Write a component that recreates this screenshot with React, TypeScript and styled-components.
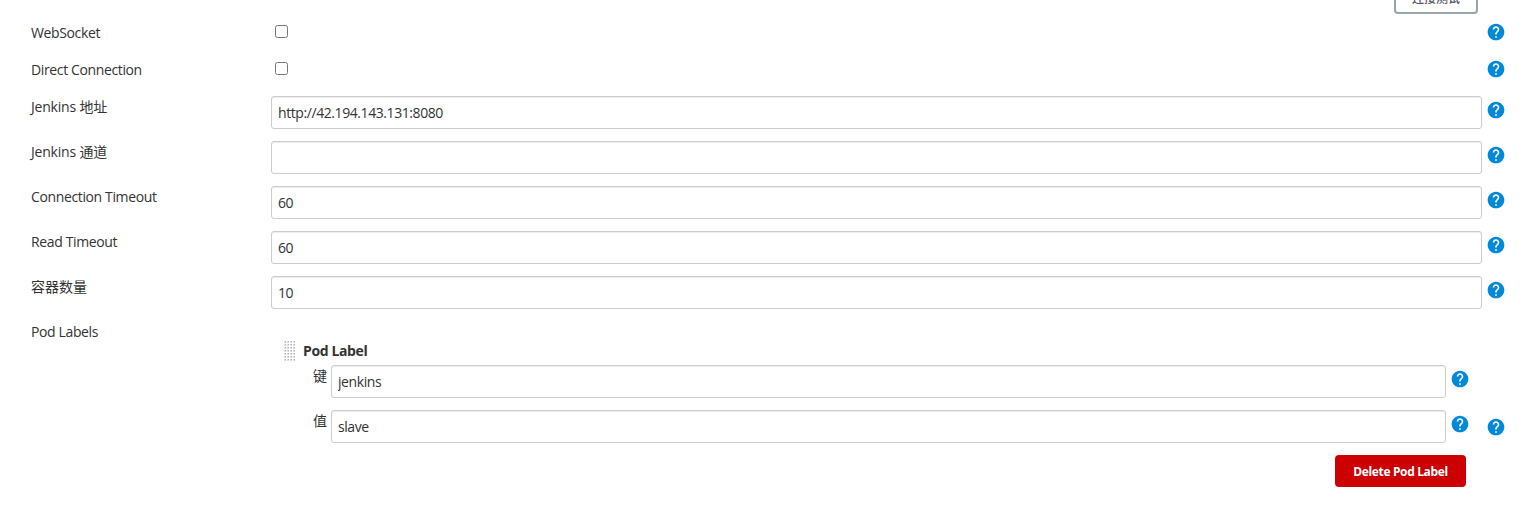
import React from "react";
import styled, { createGlobalStyle } from "styled-components";

const Global = createGlobalStyle`
  * { box-sizing: border-box; }
  body {
    margin: 0;
    background: #fff;
    color: #333;
    font: 14px/22px "Open Sans", "Noto Sans CJK SC", sans-serif;
    overflow: hidden;
  }
`;

const Page = styled.main`
  height: 506px;
  overflow: hidden;
  padding: 0 20px 0 31px;
`;

const TopBar = styled.div`
  display: flex;
  justify-content: flex-end;
  align-items: flex-end;
  height: 14px;
  margin-bottom: 8px;
  padding-right: 29px;
  overflow: hidden;
`;

const TestButton = styled.button`
  flex: none;
  width: 84px;
  height: 32px;
  padding: 2px 0 0;
  border: 2px solid #98a4ae;
  border-radius: 4px;
  background: #fff;
  color: #4d545d;
  font: 500 12px/26px "Open Sans", "Noto Sans CJK SC", sans-serif;
`;

const Row = styled.div<{ $height: number }>`
  display: flex;
  align-items: flex-start;
  height: ${(p) => p.$height}px;
`;

const Label = styled.label`
  flex: none;
  width: 240px;
  white-space: nowrap;
`;

const Text = styled.span<{ $spacing?: number }>`
  display: block;
  letter-spacing: ${(p) => p.$spacing ?? -0.37}px;
`;

const Control = styled.div`
  flex: none;
  width: 1211px;
`;

const Checkbox = styled.input.attrs({ type: "checkbox" })`
  display: block;
  width: 13px;
  height: 13px;
  margin: 3px 0 0 4px;
`;

const Field = styled.input`
  display: block;
  width: 100%;
  height: 33px;
  padding: 0 6px 1px;
  border: 1px solid #ccc;
  border-radius: 3px;
  box-shadow: inset 0 1px 1px rgba(0, 0, 0, 0.075);
  background: #fff;
  color: #333;
  font: inherit;
  letter-spacing: -0.42px;
  outline: none;
`;

const Help = styled.svg<{ $top: number }>`
  display: block;
  flex: none;
  width: 20px;
  height: 20px;
  margin: ${(p) => p.$top}px 0 0 4px;
  fill: #0288d8;
`;

const PodBlock = styled.div`
  padding: 19px 16px 0 13px;
`;

const PodHeader = styled.div`
  display: flex;
  height: 25px;
`;

const Handle = styled.svg`
  width: 12px;
  height: 20px;
  margin: 1px 7px 0 0;
`;

const PodTitle = styled.b`
  font-weight: 700;
`;

const PodRow = styled.div`
  display: flex;
  align-items: flex-start;
  height: 45px;
  padding-left: 29px;
`;

const PodKey = styled.label`
  flex: none;
  width: 18px;
`;

const PodControl = styled.div`
  flex: none;
  width: 1115px;
`;

const DeleteButton = styled.button`
  display: block;
  width: 131px;
  height: 32px;
  margin-left: auto;
  padding: 1px 0 0;
  border: 0;
  border-radius: 4px;
  background: #cc0003;
  color: #fff;
  font: 700 12px/31px "Open Sans", sans-serif;
  letter-spacing: -0.35px;
`;

const HelpIcon = ({ top }: { top: number }) => (
  <Help $top={top} viewBox="0 0 24 24">
    <path d="M12 2C6.48 2 2 6.48 2 12s4.48 10 10 10 10-4.48 10-10S17.52 2 12 2zm1 17h-2v-2h2v2zm2.07-7.75l-.9.92C13.45 12.9 13 13.5 13 15h-2v-.5c0-1.1.45-2.1 1.17-2.83l1.24-1.26c.37-.36.59-.86.59-1.41 0-1.1-.9-2-2-2s-2 .9-2 2H8c0-2.21 1.79-4 4-4s4 1.79 4 4c0 .88-.36 1.68-.93 2.25z" />
  </Help>
);

const DragHandle = () => (
  <Handle viewBox="0 0 12 20" shapeRendering="crispEdges">
    {[0, 1, 2, 3, 4, 5, 6].flatMap((r) =>
      [0, 1, 2, 3].map((c) => (
        <g key={`${r}-${c}`}>
          <rect x={c * 3} y={r * 3} width="2" height="2" fill="#dcdcdc" />
          <rect x={c * 3 + 1} y={r * 3} width="1" height="1" fill="#b0b0b0" />
        </g>
      ))
    )}
  </Handle>
);

const checks = ["WebSocket", "Direct Connection"];

const fields = [
  { label: "Jenkins 地址", spacing: -0.2, value: "http://42.194.143.131:8080" },
  { label: "Jenkins 通道", spacing: -0.2, value: "" },
  { label: "Connection Timeout", value: "60" },
  { label: "Read Timeout", value: "60" },
  { label: "容器数量", spacing: 0, value: "10" },
];

const podFields = [
  { label: "键", value: "jenkins" },
  { label: "值", value: "slave" },
];

export default function App() {
  return (
    <>
      <Global />
      <Page>
        <TopBar>
          <TestButton>连接测试</TestButton>
        </TopBar>
        {checks.map((label) => (
          <Row key={label} $height={37}>
            <Label>
              <Text>{label}</Text>
            </Label>
            <Control>
              <Checkbox />
            </Control>
            <HelpIcon top={0} />
          </Row>
        ))}
        {fields.map((f) => (
          <Row key={f.label} $height={45}>
            <Label>
              <Text $spacing={f.spacing}>{f.label}</Text>
            </Label>
            <Control>
              <Field defaultValue={f.value} />
            </Control>
            <HelpIcon top={4} />
          </Row>
        ))}
        <Row $height={185}>
          <Label>
            <Text>Pod Labels</Text>
          </Label>
          <Control>
            <PodBlock>
              <PodHeader>
                <DragHandle />
                <PodTitle>
                  <Text>Pod Label</Text>
                </PodTitle>
              </PodHeader>
              {podFields.map((p) => (
                <PodRow key={p.label}>
                  <PodKey>{p.label}</PodKey>
                  <PodControl>
                    <Field defaultValue={p.value} />
                  </PodControl>
                  <HelpIcon top={4} />
                </PodRow>
              ))}
              <DeleteButton>Delete Pod Label</DeleteButton>
            </PodBlock>
          </Control>
          <HelpIcon top={96} />
        </Row>
      </Page>
    </>
  );
}
